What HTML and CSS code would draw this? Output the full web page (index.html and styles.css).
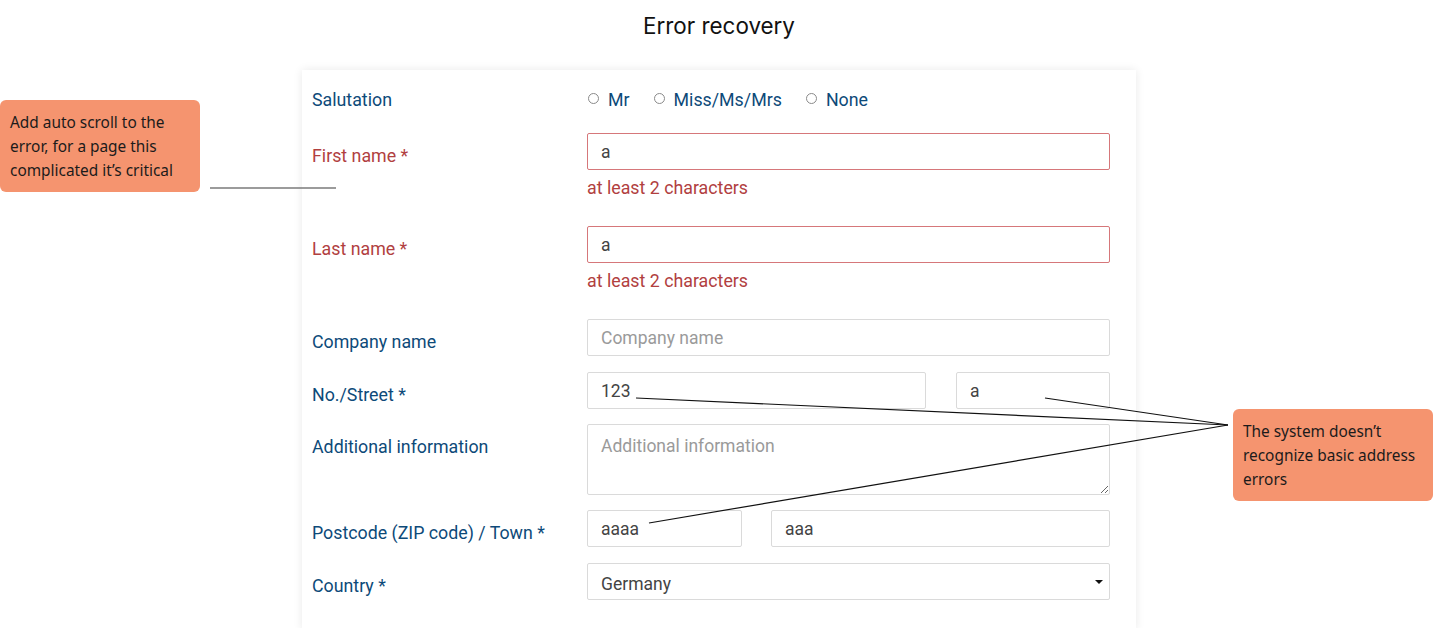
FILE: index.html
```html
<!DOCTYPE html>
<html lang="en">
<head>
<meta charset="utf-8">
<title>Error recovery</title>
<link rel="stylesheet" href="styles.css">
</head>
<body>
<div class="page">
  <header class="title">Error recovery</header>
  <main class="stage">
    <div class="side side-left">
      <div class="note">Add auto scroll to the error, for a page this complicated it’s critical</div>
    </div>
    <form class="panel">
      <div class="row row-salutation">
        <div class="label">Salutation</div>
        <div class="radios">
          <label class="radio"><span class="dot"></span>Mr</label>
          <label class="radio"><span class="dot"></span>Miss/Ms/Mrs</label>
          <label class="radio"><span class="dot"></span>None</label>
        </div>
      </div>
      <div class="row">
        <div class="label label-error">First name *</div>
        <div class="field">
          <input class="input input-error" type="text" value="a">
          <div class="error">at least 2 characters</div>
        </div>
      </div>
      <div class="row">
        <div class="label label-error">Last name *</div>
        <div class="field">
          <input class="input input-error" type="text" value="a">
          <div class="error">at least 2 characters</div>
        </div>
      </div>
      <div class="row">
        <div class="label">Company name</div>
        <div class="field">
          <input class="input" type="text" placeholder="Company name">
        </div>
      </div>
      <div class="row row-tight">
        <div class="label">No./Street *</div>
        <div class="field split split-street">
          <input class="input" type="text" value="123">
          <input class="input" type="text" value="a">
        </div>
      </div>
      <div class="row row-tight">
        <div class="label">Additional information</div>
        <div class="field">
          <textarea class="input textarea" placeholder="Additional information"></textarea>
        </div>
      </div>
      <div class="row">
        <div class="label">Postcode (ZIP code) / Town *</div>
        <div class="field split split-town">
          <input class="input" type="text" value="aaaa">
          <input class="input" type="text" value="aaa">
        </div>
      </div>
      <div class="row">
        <div class="label">Country *</div>
        <div class="field">
          <div class="input select"><span class="select-value">Germany</span><span class="caret"></span></div>
        </div>
      </div>
    </form>
    <div class="side side-right">
      <div class="note">The system doesn’t recognize basic address errors</div>
    </div>
  </main>
  <svg class="connectors" width="1438" height="628" viewBox="0 0 1438 628">
    <line x1="210" y1="188" x2="336" y2="188" stroke="#7a7a7a" stroke-width="1.5"/>
    <line x1="636" y1="398" x2="1228" y2="425" stroke="#111" stroke-width="1.2"/>
    <line x1="1045" y1="398" x2="1228" y2="425" stroke="#111" stroke-width="1.2"/>
    <line x1="649" y1="523" x2="1228" y2="425" stroke="#111" stroke-width="1.2"/>
  </svg>
</div>
</body>
</html>
```
FILE: styles.css
```css
* { box-sizing: border-box; }
html, body { margin: 0; padding: 0; background: #fff; }
.page {
  position: relative;
  width: 1438px;
  height: 628px;
  overflow: hidden;
}
.title {
  height: 70px;
  padding-top: 11px;
  text-align: center;
  font-family: Inter, "Noto Sans", sans-serif;
  font-size: 22.4px;
  line-height: 30px;
  color: #111;
}
.stage {
  display: flex;
  align-items: flex-start;
}
.side { width: 302px; flex: none; }
.side-left { padding-top: 30px; }
.side-right { padding-top: 339px; padding-left: 97px; }
.note {
  width: 200px;
  height: 92px;
  background: #f5946f;
  border-radius: 6px;
  padding: 11px 8px 9px 10px;
  font-family: "Noto Sans", sans-serif;
  font-size: 15.4px;
  line-height: 24px;
  color: #1b1b1b;
}
.panel {
  width: 834px;
  flex: none;
  height: 560px;
  background: #fff;
  box-shadow: 0 0 9px rgba(0, 0, 0, 0.09);
  padding: 17px 26px 16px 10px;
  display: flex;
  flex-direction: column;
  font-family: Roboto, sans-serif;
}
.row {
  display: grid;
  grid-template-columns: 275px 523px;
  margin-bottom: 16px;
}
.row-tight { margin-bottom: 15px; }
.row-salutation { margin-bottom: 21px; }
.label {
  color: #0d4a79;
  font-size: 17.8px;
  line-height: 24px;
  padding-top: 11px;
  white-space: nowrap;
}
.row-salutation .label { padding-top: 1px; }
.label-error { color: #b1403f; }
.radios {
  display: flex;
  align-items: center;
  gap: 24px;
  padding-left: 1px;
  padding-top: 1px;
}
.radio {
  display: flex;
  align-items: center;
  gap: 9px;
  color: #0d4a79;
  font-size: 17.8px;
  line-height: 24px;
}
.dot {
  width: 11px;
  height: 11px;
  border: 1px solid #8a8a8a;
  border-radius: 50%;
  margin-top: -4px;
}
.field { display: flex; flex-direction: column; }
.input {
  width: 100%;
  height: 37px;
  border: 1px solid #dadada;
  border-radius: 2px;
  padding: 0 13px;
  font-family: Roboto, sans-serif;
  font-size: 17.5px;
  color: #444;
  background: #fff;
  outline: none;
  margin: 0;
}
.input::placeholder { color: #9a9a9a; }
.input-error { border-color: #d6777a; }
.error {
  color: #b1403f;
  font-size: 17.8px;
  line-height: 24px;
  margin-top: 6px;
  margin-bottom: 10px;
}
.split { flex-direction: row; justify-content: space-between; }
.split-street .input:first-child { width: 339px; }
.split-street .input:last-child { width: 154px; }
.split-town .input:first-child { width: 155px; }
.split-town .input:last-child { width: 339px; }
.textarea {
  height: 71px;
  padding-top: 9px;
  resize: vertical;
  display: block;
  line-height: 24px;
}
.select {
  display: flex;
  align-items: center;
  justify-content: space-between;
  padding-right: 6px;
  padding-top: 4px;
}
.select-value {
  line-height: 22px;
}
.caret {
  width: 0;
  height: 0;
  border-left: 4px solid transparent;
  border-right: 4px solid transparent;
  border-top: 4px solid #111;
  margin-top: -4px;
}
.connectors {
  position: absolute;
  left: 0;
  top: 0;
  pointer-events: none;
}
```
